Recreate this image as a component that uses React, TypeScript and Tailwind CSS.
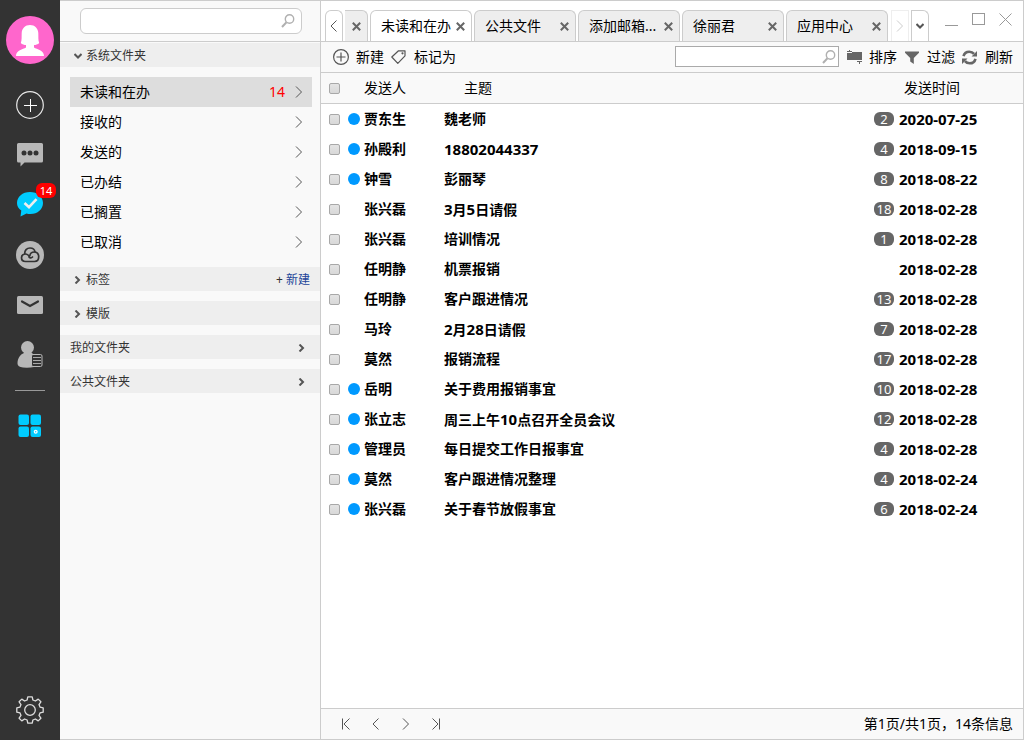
import type { ReactNode } from "react";

const folders: { name: string; count?: number }[] = [
  { name: "未读和在办", count: 14 },
  { name: "接收的" },
  { name: "发送的" },
  { name: "已办结" },
  { name: "已搁置" },
  { name: "已取消" },
];

const tabs = ["未读和在办", "公共文件", "添加邮箱...", "徐丽君", "应用中心"];

const messages: { unread: boolean; sender: string; subject: string; count: number | null; date: string }[] = [
  { unread: true, sender: "贾东生", subject: "魏老师", count: 2, date: "2020-07-25" },
  { unread: true, sender: "孙殿利", subject: "18802044337", count: 4, date: "2018-09-15" },
  { unread: true, sender: "钟雪", subject: "彭丽琴", count: 8, date: "2018-08-22" },
  { unread: false, sender: "张兴磊", subject: "3月5日请假", count: 18, date: "2018-02-28" },
  { unread: false, sender: "张兴磊", subject: "培训情况", count: 1, date: "2018-02-28" },
  { unread: false, sender: "任明静", subject: "机票报销", count: null, date: "2018-02-28" },
  { unread: false, sender: "任明静", subject: "客户跟进情况", count: 13, date: "2018-02-28" },
  { unread: false, sender: "马玲", subject: "2月28日请假", count: 7, date: "2018-02-28" },
  { unread: false, sender: "莫然", subject: "报销流程", count: 17, date: "2018-02-28" },
  { unread: true, sender: "岳明", subject: "关于费用报销事宜", count: 10, date: "2018-02-28" },
  { unread: true, sender: "张立志", subject: "周三上午10点召开全员会议", count: 12, date: "2018-02-28" },
  { unread: true, sender: "管理员", subject: "每日提交工作日报事宜", count: 4, date: "2018-02-28" },
  { unread: true, sender: "莫然", subject: "客户跟进情况整理", count: 4, date: "2018-02-24" },
  { unread: true, sender: "张兴磊", subject: "关于春节放假事宜", count: 6, date: "2018-02-24" },
];

/* ---------- icons ---------- */

function ThinChevron({ dir = "right", className = "" }: { dir?: "left" | "right"; className?: string }) {
  return (
    <svg width="8" height="12" viewBox="0 0 8 12" fill="none" stroke="currentColor" className={className} aria-hidden="true">
      <path d={dir === "right" ? "M1 0.5 L6.5 6 L1 11.5" : "M6.5 0.5 L1 6 L6.5 11.5"} />
    </svg>
  );
}

function BoldChevron({ down = false }: { down?: boolean }) {
  return (
    <svg width="8" height="8" viewBox="0 0 8 8" fill="none" stroke="#555" strokeWidth="2" aria-hidden="true">
      <path d={down ? "M0.5 2 L4 5.5 L7.5 2" : "M1.5 0.5 L5 4 L1.5 7.5"} />
    </svg>
  );
}

function Magnifier() {
  return (
    <svg width="14" height="14" viewBox="0 0 14 14" fill="none" stroke="#b0b0b0" aria-hidden="true">
      <circle cx="8.5" cy="5" r="4.2" strokeWidth="1.4" />
      <path d="M5.5 8.3 L1 13" strokeWidth="2" />
    </svg>
  );
}

function CloseMark() {
  return (
    <svg width="9" height="9" viewBox="0 0 9 9" fill="none" stroke="#666" strokeWidth="2" aria-hidden="true">
      <path d="M0.8 0.8 L8.2 8.2 M8.2 0.8 L0.8 8.2" />
    </svg>
  );
}

function PersonAvatar() {
  return (
    <svg width="48" height="48" viewBox="0 0 48 48" aria-hidden="true">
      <circle cx="24" cy="24" r="24" fill="#ff66cc" />
      <path
        fill="#fff"
        d="M24 9 C28.8 9 32 12.3 32.3 17 C32.5 20.5 32 24 33.2 27 C31.8 28.6 29.6 29 28 29 V31.5 C31 33.3 38 34.3 38 40 H10 C10 34.3 17 33.3 20 31.5 V29 C18.4 29 16.2 28.6 14.8 27 C16 24 15.5 20.5 15.7 17 C16 12.3 19.2 9 24 9 Z"
      />
    </svg>
  );
}

function CirclePlus() {
  return (
    <svg width="28" height="28" viewBox="0 0 28 28" fill="none" stroke="#e8e8e8" aria-hidden="true">
      <circle cx="14" cy="14" r="13.3" strokeWidth="1.2" />
      <path d="M14.5 8 V21 M8 14.5 H21" stroke="#fff" shapeRendering="crispEdges" />
    </svg>
  );
}

function ChatIcon() {
  return (
    <svg width="26" height="24" viewBox="0 0 26 24" aria-hidden="true">
      <path fill="#b8b8b8" d="M1.5 0 H24.5 Q26 0 26 1.5 V18 Q26 19.500 24.5 19.500 H7.500 L3.500 23.500 V19.500 H1.500 Q0 19.500 0 18 V1.500 Q0 0 1.500 0 Z" />
      <circle cx="7" cy="10" r="2.5" fill="#333" />
      <circle cx="13" cy="10" r="2.5" fill="#333" />
      <circle cx="19" cy="10" r="2.5" fill="#333" />
    </svg>
  );
}

function CheckBubble() {
  return (
    <svg width="26" height="26" viewBox="0 0 26 26" aria-hidden="true">
      <path fill="#00ccff" d="M13 0 C20.500 0 26 4.800 26 11 C26 17.200 20.500 22 13.500 22 C12 22 10.800 21.800 9.500 21.400 L3.500 24.500 L4.300 18.500 C1.500 16.500 0 14 0 11 C0 4.800 5.500 0 13 0 Z" />
      <path d="M7.500 11 L12 15.200 L19.500 7.200" fill="none" stroke="#eee" strokeWidth="2.6" />
    </svg>
  );
}

function CloudIcon() {
  return (
    <svg width="28" height="28" viewBox="0 0 28 28" fill="none" aria-hidden="true">
      <circle cx="14" cy="14" r="14" fill="#b8b8b8" />
      <g stroke="#333" strokeWidth="1.7" strokeLinecap="round" strokeLinejoin="round">
        <path d="M9.5 20.5 C7 20.5 5.5 18.8 5.5 16.7 C5.5 14.8 6.8 13.3 8.7 13 C8.5 9.5 10.8 7 14 7 C16.8 7 18.7 8.7 19 11 C21.5 11.3 22.7 13.5 22.7 15.8 C22.7 18.5 21 20.5 18.5 20.5 Z" />
        <path d="M19 11 C16 10.8 14 12.5 13.8 15 M8.7 13 C11 12.8 13 14.500 13.300 16.500 C14 17.200 15.500 17 16.500 16" />
      </g>
    </svg>
  );
}

function MailIcon() {
  return (
    <svg width="26" height="18" viewBox="0 0 26 18" aria-hidden="true">
      <rect width="26" height="18" rx="1.5" fill="#b8b8b8" />
      <path d="M5 5.500 L13 10 L21 5.500" fill="none" stroke="#333" strokeWidth="2.2" strokeLinecap="round" />
    </svg>
  );
}

function ContactIcon() {
  return (
    <svg width="26" height="28" viewBox="0 0 26 28" aria-hidden="true">
      <circle cx="10.5" cy="6.500" r="6.500" fill="#b8b8b8" />
      <path fill="#b8b8b8" d="M7 11 H14 L17 14 V26 Q12 27 6 26.500 Q0.500 26 0.500 22.500 C0.500 17.500 3 13.500 7 12 Z" />
      <rect x="14.500" y="13.500" width="10.500" height="12" rx="1.500" fill="#333" stroke="#b8b8b8" strokeWidth="1" />
      <path d="M16 16.500 H24 M16 19.500 H24 M16 22.500 H24" stroke="#a8a8a8" />
    </svg>
  );
}

function AppsIcon() {
  return (
    <svg width="24" height="24" viewBox="0 0 24 24" fill="#00ccff" aria-hidden="true">
      <rect x="0.500" y="0.500" width="10.500" height="10.500" rx="2" />
      <rect x="12.500" y="0.500" width="10.500" height="10.500" rx="2" />
      <rect x="0.500" y="12.500" width="10.500" height="10.500" rx="2" />
      <rect x="12.500" y="12.500" width="10.500" height="10.500" rx="2" />
      <circle cx="17.700" cy="17.700" r="2" fill="#fff" />
      <circle cx="17.700" cy="17.700" r="0.700" />
    </svg>
  );
}

function GearIcon() {
  return (
    <svg width="28" height="28" viewBox="0 0 28 28" fill="none" stroke="#ddd" strokeWidth="1.3" strokeLinejoin="round" aria-hidden="true">
      <path d="M11.8 0.8 H16.2 L16.9 4 L19.4 5 L22.2 3.1 L24.9 5.8 L23 8.6 L24 11.1 L27.2 11.8 V16.2 L24 16.9 L23 19.4 L24.9 22.2 L22.2 24.9 L19.4 23 L16.9 24 L16.2 27.2 H11.8 L11.1 24 L8.6 23 L5.8 24.9 L3.1 22.2 L5 19.4 L4 16.9 L0.8 16.2 V11.8 L4 11.1 L5 8.6 L3.1 5.8 L5.8 3.1 L8.6 5 L11.1 4 Z" />
      <circle cx="14" cy="14" r="5.3" />
    </svg>
  );
}

function NewIcon() {
  return (
    <svg width="16" height="16" viewBox="0 0 16 16" fill="none" stroke="#555" aria-hidden="true">
      <circle cx="8" cy="8" r="7.4" strokeWidth="1.2" />
      <path d="M8 3.5 V12.5 M3.5 8 H12.5" strokeWidth="1.2" />
    </svg>
  );
}

function TagIcon() {
  return (
    <svg width="15" height="14" viewBox="0 0 15 14" fill="none" stroke="#555" strokeWidth="1.2" strokeLinejoin="round" aria-hidden="true">
      <path d="M0.8 7 L7.5 0.8 H14 V5.8 L6.8 13.3 Z" />
      <circle cx="11.5" cy="3.3" r="0.5" />
    </svg>
  );
}

function SortIcon() {
  return (
    <svg width="15" height="14" viewBox="0 0 15 14" fill="#666" aria-hidden="true">
      <path d="M2 0 H3 V1 H5 V2 H0 V1 H2 Z M0 3 H5 V2 H15 V10 H0 Z" />
      <path d="M10 11 H15 V12 H13 V14 H12 V12 H10 Z" />
    </svg>
  );
}

function FilterIcon() {
  return (
    <svg width="14" height="13" viewBox="0 0 14 13" fill="#666" aria-hidden="true">
      <path d="M0 0.5 H14 V1.8 L8.8 7 V13 L5.2 10.5 V7 L0 1.8 Z" />
    </svg>
  );
}

function RefreshIcon() {
  return (
    <svg width="15" height="15" viewBox="0 0 15 15" aria-hidden="true">
      <g fill="none" stroke="#666" strokeWidth="2.6">
        <path d="M1.5 6.2 C2.2 3.5 4.6 1.7 7.3 1.7 C9.3 1.7 10.9 2.5 12 3.9" />
        <path d="M13.5 8.8 C12.8 11.5 10.4 13.3 7.7 13.3 C5.7 13.3 4.1 12.5 3 11.1" />
      </g>
      <path fill="#666" d="M15 1 V6.5 H9.5 Z M0 14 V8.5 H5.5 Z" />
    </svg>
  );
}

/* ---------- building blocks ---------- */

const checkboxClass =
  "block h-[11px] w-[11px] appearance-none rounded-[2px] border border-[#a8a8a8] bg-linear-to-b from-[#e4e4e4] to-[#d8d8d8] checked:bg-[#0099ff]";

function RailButton({ label, children }: { label: string; children: ReactNode }) {
  return (
    <button type="button" aria-label={label} className="relative flex h-[50px] w-full items-center justify-center">
      {children}
    </button>
  );
}

function Rail() {
  return (
    <nav className="flex w-[60px] shrink-0 flex-col items-center bg-[#333]">
      <button type="button" aria-label="个人资料" className="mt-4 mb-4">
        <PersonAvatar />
      </button>
      <RailButton label="新增"><CirclePlus /></RailButton>
      <RailButton label="消息"><ChatIcon /></RailButton>
      <RailButton label="协作">
        <CheckBubble />
        <span className="absolute top-[3px] right-1 flex h-[15px] w-5 items-center justify-center rounded-md bg-[#f00] text-[11px] leading-none text-white">
          14
        </span>
      </RailButton>
      <RailButton label="云盘"><CloudIcon /></RailButton>
      <RailButton label="邮件"><MailIcon /></RailButton>
      <RailButton label="联系人"><ContactIcon /></RailButton>
      <div className="mt-2.5 mb-2.5 h-px w-[30px] bg-[#999]" />
      <RailButton label="应用"><AppsIcon /></RailButton>
      <button type="button" aria-label="设置" className="mt-auto mb-4">
        <GearIcon />
      </button>
    </nav>
  );
}

function SideHeading({ children, action }: { children: ReactNode; action?: ReactNode }) {
  return (
    <div className="flex h-6 items-center justify-between bg-[#eee] pt-0.5 pr-2.5 text-xs text-[#333]">
      {children}
      {action}
    </div>
  );
}

function FolderPanel() {
  return (
    <aside className="flex w-[260px] shrink-0 flex-col border-y border-[#ccc] bg-[#f9f9f9]">
      <div className="border-b border-[#ccc] pt-[7px] pr-[18px] pb-[7px] pl-5">
        <label className="flex h-[26px] items-center rounded-md border border-[#ccc] bg-white pr-1.5">
          <input type="text" aria-label="搜索文件夹" className="h-full min-w-0 flex-1 bg-transparent px-2 text-sm outline-none" />
          <Magnifier />
        </label>
      </div>
      <div className="mt-px flex flex-col gap-2.5">
        <SideHeading>
          <button type="button" className="flex items-center gap-1 pl-3.5"><BoldChevron down />系统文件夹</button>
        </SideHeading>
        <ul className="pr-2 pl-2.5 text-sm text-black">
          {folders.map((f, i) => (
            <li key={f.name}>
              <a href="#" className={`flex h-[30px] items-center pr-[9px] pl-2.5 ${i === 0 ? "bg-[#ddd]" : ""}`}>
                <span className="flex-1">{f.name}</span>
                {f.count !== undefined && <span className="mr-2.5 text-[#f00]">{f.count}</span>}
                <ThinChevron className="text-[#555]" />
              </a>
            </li>
          ))}
        </ul>
        <SideHeading action={<button type="button" className="text-[#224499]"><span className="text-[#333]">+</span> 新建</button>}>
          <button type="button" className="flex items-center gap-1 pl-3.5"><BoldChevron />标签</button>
        </SideHeading>
        <SideHeading>
          <button type="button" className="flex items-center gap-1 pl-3.5"><BoldChevron />模版</button>
        </SideHeading>
        {["我的文件夹", "公共文件夹"].map((name) => (
          <SideHeading key={name}>
            <button type="button" className="flex flex-1 items-center justify-between pr-1 pl-2.5">
              {name}
              <BoldChevron />
            </button>
          </SideHeading>
        ))}
      </div>
    </aside>
  );
}

function TabBar() {
  return (
    <div className="flex h-[41px] items-end border-b border-[#ccc] pl-1 text-sm text-black">
      <button type="button" aria-label="向左滚动" className="mr-0.5 flex h-[31px] w-[18px] items-center justify-center rounded-t-md border border-b-0 border-[#ccc] text-[#555]">
        <ThinChevron dir="left" />
      </button>
      <div className="mr-0.5 flex h-[31px] w-[23px] items-center justify-center rounded-tr-md border border-b-0 border-l-0 border-[#ccc] bg-[#eee]">
        <button type="button" aria-label="关闭"><CloseMark /></button>
      </div>
      <div className="flex gap-0.5">
        {tabs.map((t, i) => (
          <div
            key={t}
            className={`flex h-[31px] w-[102px] items-center rounded-t-md border border-b-0 border-[#ccc] pr-1.5 pl-2.5 ${i === 0 ? "bg-white" : "bg-[#eee]"}`}
          >
            <button type="button" className="min-w-0 flex-1 text-left whitespace-nowrap">{t}</button>
            <button type="button" aria-label={`关闭${t}`}><CloseMark /></button>
          </div>
        ))}
      </div>
      <button type="button" aria-label="向右滚动" className="ml-[3px] flex h-[31px] w-[18px] items-center justify-center border border-b-0 border-[#eee] text-[#ccc]">
        <ThinChevron />
      </button>
      <button type="button" aria-label="全部标签页" className="ml-0.5 flex h-[31px] w-[18px] items-center justify-center rounded-tr-md border border-b-0 border-[#ccc]">
        <BoldChevron down />
      </button>
      <div className="mr-[11px] mb-[15px] ml-auto flex items-end gap-3.5 text-[#999]">
        <button type="button" aria-label="最小化" className="block">
          <svg width="13" height="13" viewBox="0 0 13 13" stroke="currentColor" aria-hidden="true"><path d="M0 12.5 H13" /></svg>
        </button>
        <button type="button" aria-label="最大化" className="block">
          <svg width="13" height="13" viewBox="0 0 13 13" fill="none" stroke="currentColor" aria-hidden="true"><rect x="0.5" y="0.5" width="12" height="11" /></svg>
        </button>
        <button type="button" aria-label="关闭窗口" className="block">
          <svg width="13" height="13" viewBox="0 0 13 13" stroke="currentColor" aria-hidden="true"><path d="M0.5 0.5 L12.5 12.5 M12.5 0.5 L0.5 12.5" /></svg>
        </button>
      </div>
    </div>
  );
}

function Toolbar() {
  return (
    <div className="flex h-[31px] items-center border-b border-[#ccc] bg-[#f9f9f9] pr-2.5 pl-3 text-sm text-black">
      <button type="button" className="flex items-center gap-[7px]"><NewIcon />新建</button>
      <button type="button" className="ml-[7px] flex items-center gap-2"><TagIcon />标记为</button>
      <label className="mb-px ml-auto flex h-[21px] w-[164px] items-center border border-[#aaa] bg-white pr-0.5">
        <input type="text" aria-label="搜索" className="h-full min-w-0 flex-1 bg-transparent px-1 text-sm outline-none" />
        <Magnifier />
      </label>
      <button type="button" className="ml-2 flex items-center gap-[7px]"><SortIcon />排序</button>
      <button type="button" className="ml-2 flex items-center gap-2"><FilterIcon />过滤</button>
      <button type="button" className="ml-[7px] flex items-center gap-2"><RefreshIcon />刷新</button>
    </div>
  );
}

function Subject({ text }: { text: string }) {
  return (
    <>
      {text.split(/(\d+)/).map((part, i) =>
        /^\d+$/.test(part) ? <span key={i} className="text-[15px]">{part}</span> : part,
      )}
    </>
  );
}

function MessageTable() {
  return (
    <table className="w-full table-fixed border-separate border-spacing-0 text-left text-sm text-black">
      <colgroup>
        <col className="w-[23px]" />
        <col className="w-5" />
        <col className="w-20" />
        <col />
        <col className="w-[25px]" />
        <col className="w-[124px]" />
      </colgroup>
      <thead>
        <tr className="h-[31px] bg-[#f9f9f9]">
          <th className="border-b border-[#ccc] p-0 pl-2"><input type="checkbox" aria-label="全选" className={checkboxClass} /></th>
          <th className="border-b border-[#ccc] p-0" />
          <th className="border-b border-[#ccc] p-0 leading-5 font-normal">发送人</th>
          <th className="border-b border-[#ccc] p-0 pl-5 leading-5 font-normal">主题</th>
          <th className="border-b border-[#ccc] p-0" />
          <th className="border-b border-[#ccc] p-0 pl-[5px] leading-5 font-normal">发送时间</th>
        </tr>
      </thead>
      <tbody>
        {messages.map((m, i) => (
          <tr key={i} className="h-[30px] font-bold">
            <td className="p-0 pl-2">
              <input type="checkbox" aria-label={`选择 ${m.sender} ${m.subject}`} className={checkboxClass} />
            </td>
            <td className="p-0 pl-1">{m.unread && <span className="block h-3 w-3 rounded-full bg-[#0099ff]" />}</td>
            <td className="p-0 leading-5">{m.sender}</td>
            <td className="truncate p-0 leading-5"><Subject text={m.subject} /></td>
            <td className="p-0">
              {m.count !== null && (
                <span className="flex h-3.5 w-5 items-center justify-center rounded-md bg-[#666] text-[13px] leading-none font-normal text-white">
                  {m.count}
                </span>
              )}
            </td>
            <td className="p-0 text-[15px] leading-5 whitespace-nowrap">{m.date}</td>
          </tr>
        ))}
      </tbody>
    </table>
  );
}

function Pager() {
  return (
    <footer className="flex h-[31px] items-center justify-between border-t border-[#ccc] bg-[#f9f9f9] pr-2.5 pl-5 text-sm text-black">
      <div className="flex gap-[22px] text-[#555]">
        <button type="button" aria-label="第一页" className="flex">
          <svg width="9" height="12" viewBox="0 0 9 12" fill="none" stroke="currentColor" aria-hidden="true"><path d="M1.5 0.5 V11.5 M8.5 0.5 L3 6 L8.5 11.5" /></svg>
        </button>
        <button type="button" aria-label="上一页"><ThinChevron dir="left" /></button>
        <button type="button" aria-label="下一页"><ThinChevron /></button>
        <button type="button" aria-label="最后一页" className="flex">
          <svg width="9" height="12" viewBox="0 0 9 12" fill="none" stroke="currentColor" aria-hidden="true"><path d="M7.5 0.5 V11.5 M0.5 0.5 L6 6 L0.5 11.5" /></svg>
        </button>
      </div>
      <span>第1页/共1页，14条信息</span>
    </footer>
  );
}

export default function App() {
  return (
    <div className="flex min-h-screen bg-white font-['Noto_Sans','Noto_Sans_CJK_SC',sans-serif]">
      <Rail />
      <FolderPanel />
      <main className="flex min-w-0 flex-1 flex-col border border-[#ccc]">
        <TabBar />
        <Toolbar />
        <div className="flex-1"><MessageTable /></div>
        <Pager />
      </main>
    </div>
  );
}
